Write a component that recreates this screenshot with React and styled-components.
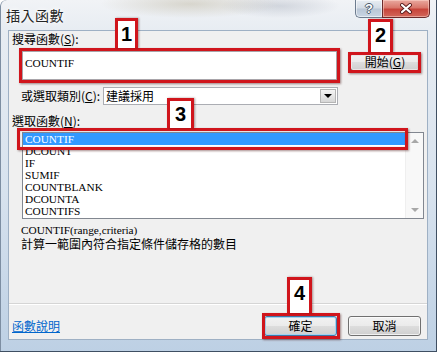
import React from 'react';
import styled, { createGlobalStyle } from 'styled-components';

const CJK = `"Noto Sans CJK TC", "Noto Sans", sans-serif`;
const SERIF = `"Liberation Serif", "Noto Sans CJK TC", serif`;

const Global = createGlobalStyle`
  html, body { margin: 0; padding: 0; }
  body { width: 437px; height: 352px; overflow: hidden; background: #fff; }
`;

const Frame = styled.div`
  position: relative;
  width: 437px;
  height: 352px;
  box-sizing: border-box;
  display: flex;
  flex-direction: column;
  font-family: ${CJK};
  font-size: 12px;
  color: #000;
  background:
    radial-gradient(ellipse 90px 14px at 190px 4px, rgba(170,160,130,0.35), rgba(170,160,130,0) 100%),
    radial-gradient(ellipse 60px 12px at 280px 6px, rgba(120,130,150,0.25), rgba(120,130,150,0) 100%),
    linear-gradient(180deg, #f1f3f6 0%, #e7ecf2 9%, #d7e2ee 55%, #bdd0e4 100%);
  box-shadow: inset -1px -1px 0 #3f4f62, inset 1px 0 0 #7d8ea2;
  border-top-left-radius: 6px;
  overflow: hidden;
`;

const TitleBar = styled.div`
  height: 30px;
  flex: none;
  display: flex;
  align-items: flex-start;
  padding: 0 7px 0 6px;
`;

const Title = styled.div`
  font-size: 14px;
  line-height: 30px;
  color: #262626;
  letter-spacing: 0.5px;
  text-shadow: 0 0 6px #fff, 0 0 3px #fff;
`;

const Captions = styled.div`
  margin-left: auto;
  display: flex;
`;

const HelpBtn = styled.div`
  width: 27px;
  height: 18px;
  box-sizing: border-box;
  border: 1px solid #6d7c8f;
  border-top: none;
  border-right: none;
  border-bottom-left-radius: 5px;
  background: linear-gradient(180deg, #e8edf3 0%, #d3dbe5 48%, #b9c6d6 52%, #c9d5e3 100%);
  box-shadow: inset 0 0 0 1px rgba(255,255,255,0.55);
  display: flex;
  align-items: center;
  justify-content: center;
  font-family: "Liberation Sans", sans-serif;
  font-weight: bold;
  font-size: 13px;
  color: #fff;
  text-shadow: 1px 0 0 #4b5a6b, -1px 0 0 #4b5a6b, 0 1px 0 #4b5a6b, 0 -1px 0 #4b5a6b;
`;

const CloseBtn = styled.div`
  width: 48px;
  height: 18px;
  box-sizing: border-box;
  border: 1px solid #6b2b2b;
  border-top: none;
  border-bottom-right-radius: 5px;
  background: linear-gradient(180deg, #e9a99f 0%, #d9776b 45%, #c7443a 55%, #d2675a 100%);
  box-shadow: inset 0 0 0 1px rgba(255,220,210,0.5);
  display: flex;
  align-items: center;
  justify-content: center;
`;

const Client = styled.div`
  margin: 0 9px 0 8px;
  height: 310px;
  flex: none;
  box-sizing: border-box;
  border: 1px solid #9eb0c4;
  background: #f0f0f0;
  display: flex;
  flex-direction: column;
`;

const Label = styled.div`
  line-height: 14px;
  height: 14px;
  padding-left: ${p => p.$indent || 3}px;
  margin-top: ${p => p.$top || 0}px;
  white-space: nowrap;
`;

const SearchRow = styled.div`
  display: flex;
  align-items: flex-start;
  margin-top: 5px;
  padding-left: 13px;
`;

const TextBox = styled.div`
  width: 315px;
  height: 29px;
  box-sizing: border-box;
  border: 1px solid #abadb3;
  background: #fff;
  padding: 4px 2px;
  font-family: ${SERIF};
  font-size: 11.3px;
  line-height: 14px;
`;

const Button = styled.div`
  width: ${p => p.$w || 73}px;
  height: ${p => p.$h || 20}px;
  margin-left: ${p => p.$ml || 0}px;
  margin-top: ${p => p.$mt || 0}px;
  box-sizing: border-box;
  border: 1px solid ${p => (p.$default ? '#3c7fb1' : '#707070')};
  border-radius: 3px;
  background: linear-gradient(180deg, #f2f2f2 0%, #ebebeb 48%, #dddddd 52%, #cfcfcf 100%);
  box-shadow: inset 0 0 0 1px ${p => (p.$default ? '#a3d3f1' : 'rgba(255,255,255,0.7)')};
  display: flex;
  align-items: center;
  justify-content: center;
  font-size: 12px;
  line-height: 14px;
  color: #000;
`;

const CategoryRow = styled.div`
  display: flex;
  align-items: center;
  margin-top: 7px;
  padding-left: 12px;
`;

const CatLabel = styled.div`
  width: 82px;
  line-height: 14px;
  white-space: nowrap;
`;

const Select = styled.div`
  width: 235px;
  height: 18px;
  box-sizing: border-box;
  border: 1px solid #abadb3;
  background: #fff;
  display: flex;
  align-items: center;
  padding-left: 2px;
  line-height: 14px;
`;

const SelectText = styled.div`
  flex: 1;
`;

const DropArrow = styled.div`
  width: 16px;
  height: 14px;
  margin-right: 1px;
  box-sizing: border-box;
  border: 1px solid #b5b5b5;
  background: linear-gradient(180deg, #f4f4f4 0%, #e6e6e6 50%, #d6d6d6 100%);
  display: flex;
  align-items: center;
  justify-content: center;
  &::after {
    content: '';
    border-left: 4px solid transparent;
    border-right: 4px solid transparent;
    border-top: 4px solid #000;
  }
`;

const ListBox = styled.div`
  margin-top: 4px;
  margin-left: 13px;
  width: 402px;
  height: 87px;
  box-sizing: border-box;
  border: 1px solid #828790;
  background: #fff;
  display: flex;
`;

const Items = styled.div`
  flex: 1;
  display: flex;
  flex-direction: column;
`;

const Item = styled.div`
  height: 12px;
  line-height: 12px;
  padding-left: 2px;
  font-family: ${SERIF};
  font-size: 11.3px;
  background: ${p => (p.$selected ? '#3399ff' : 'transparent')};
  color: ${p => (p.$selected ? '#fff' : '#000')};
  white-space: nowrap;
`;

const ScrollBar = styled.div`
  width: 17px;
  background: #f8f8f8;
  border-left: 1px solid #efefef;
  display: flex;
  flex-direction: column;
  justify-content: space-between;
  align-items: center;
  padding: 6px 0 6px;
`;

const ScrollArrow = styled.div`
  width: 0;
  height: 0;
  border-left: 4px solid transparent;
  border-right: 4px solid transparent;
  ${p => (p.$up ? 'border-bottom: 4px solid #a8a8a8;' : 'border-top: 4px solid #a8a8a8;')}
`;

const Desc = styled.div`
  margin-top: 4px;
  padding-left: 12px;
  display: flex;
  flex-direction: column;
`;

const Syntax = styled.div`
  font-family: ${SERIF};
  font-size: 11.3px;
  line-height: 14px;
  height: 14px;
`;

const DescText = styled.div`
  line-height: 14px;
  height: 14px;
  white-space: nowrap;
`;

const Separator = styled.div`
  margin-top: 52px;
  border-top: 1px solid #d5d5d5;
  border-bottom: 1px solid #ffffff;
`;

const BottomRow = styled.div`
  margin-top: 8px;
  height: 26px;
  display: flex;
  align-items: center;
  padding: 0 6px 0 3px;
`;

const HelpLink = styled.a`
  color: #0066cc;
  text-decoration: underline;
  line-height: 14px;
  margin-right: auto;
  cursor: pointer;
`;

const Annotations = styled.div`
  position: absolute;
  inset: 0;
  pointer-events: none;
`;

const RedFrame = styled.div`
  position: absolute;
  left: ${p => p.$x}px;
  top: ${p => p.$y}px;
  width: ${p => p.$w}px;
  height: ${p => p.$h}px;
  box-sizing: border-box;
  border: 3px solid #d0151c;
  box-shadow: 1px 1px 2px rgba(60,0,0,0.45), inset 0 0 1px rgba(120,0,0,0.5);
`;

const NumTag = styled.div`
  position: absolute;
  left: ${p => p.$x}px;
  top: ${p => p.$y}px;
  width: ${p => p.$w}px;
  height: ${p => p.$h}px;
  box-sizing: border-box;
  border: 3px solid #d0151c;
  border-bottom: none;
  background: #fff;
  display: flex;
  justify-content: center;
  padding-top: 3px;
  font-family: "Liberation Sans", Arial, sans-serif;
  font-weight: bold;
  font-size: 20px;
  line-height: 20px;
  color: #000;
  box-shadow: 1px 0 2px rgba(60,0,0,0.4);
`;

const functions = ['COUNTIF', 'DCOUNT', 'IF', 'SUMIF', 'COUNTBLANK', 'DCOUNTA', 'COUNTIFS'];

export default function App() {
  return (
    <>
      <Global />
      <Frame>
        <TitleBar>
          <Title>插入函數</Title>
          <Captions>
            <HelpBtn>?</HelpBtn>
            <CloseBtn>
              <svg width="14" height="11" viewBox="0 0 14 11">
                <path d="M3 2 L11 9 M11 2 L3 9" stroke="#5a1d1d" strokeWidth="4" strokeLinecap="round" />
                <path d="M3 2 L11 9 M11 2 L3 9" stroke="#fff" strokeWidth="2.2" strokeLinecap="round" />
              </svg>
            </CloseBtn>
          </Captions>
        </TitleBar>
        <Client>
          <Label $top={1}>搜尋函數(<u>S</u>):</Label>
          <SearchRow>
            <TextBox>COUNTIF</TextBox>
            <Button $w={70} $h={18} $ml={13} $mt={2}>開始(<u>G</u>)</Button>
          </SearchRow>
          <CategoryRow>
            <CatLabel>或選取類別(<u>C</u>):</CatLabel>
            <Select>
              <SelectText>建議採用</SelectText>
              <DropArrow />
            </Select>
          </CategoryRow>
          <Label $top={9}>選取函數(<u>N</u>):</Label>
          <ListBox>
            <Items>
              {functions.map((f, i) => (
                <Item key={f} $selected={i === 0}>{f}</Item>
              ))}
            </Items>
            <ScrollBar>
              <ScrollArrow $up />
              <ScrollArrow />
            </ScrollBar>
          </ListBox>
          <Desc>
            <Syntax>COUNTIF(range,criteria)</Syntax>
            <DescText>計算一範圍內符合指定條件儲存格的數目</DescText>
          </Desc>
          <Separator />
          <BottomRow>
            <HelpLink>函數說明</HelpLink>
            <Button $default>確定</Button>
            <Button $ml={11}>取消</Button>
          </BottomRow>
        </Client>
        <Annotations>
          <RedFrame $x={19} $y={48} $w={321} $h={35} />
          <RedFrame $x={348} $y={52} $w={73} $h={21} />
          <RedFrame $x={17} $y={128} $w={391} $h={22} />
          <RedFrame $x={262} $y={313} $w={78} $h={26} />
          <NumTag $x={115} $y={18} $w={23} $h={30}>1</NumTag>
          <NumTag $x={368} $y={19} $w={25} $h={33}>2</NumTag>
          <NumTag $x={167} $y={98} $w={27} $h={30}>3</NumTag>
          <NumTag $x={287} $y={277} $w={25} $h={36}>4</NumTag>
        </Annotations>
      </Frame>
    </>
  );
}
